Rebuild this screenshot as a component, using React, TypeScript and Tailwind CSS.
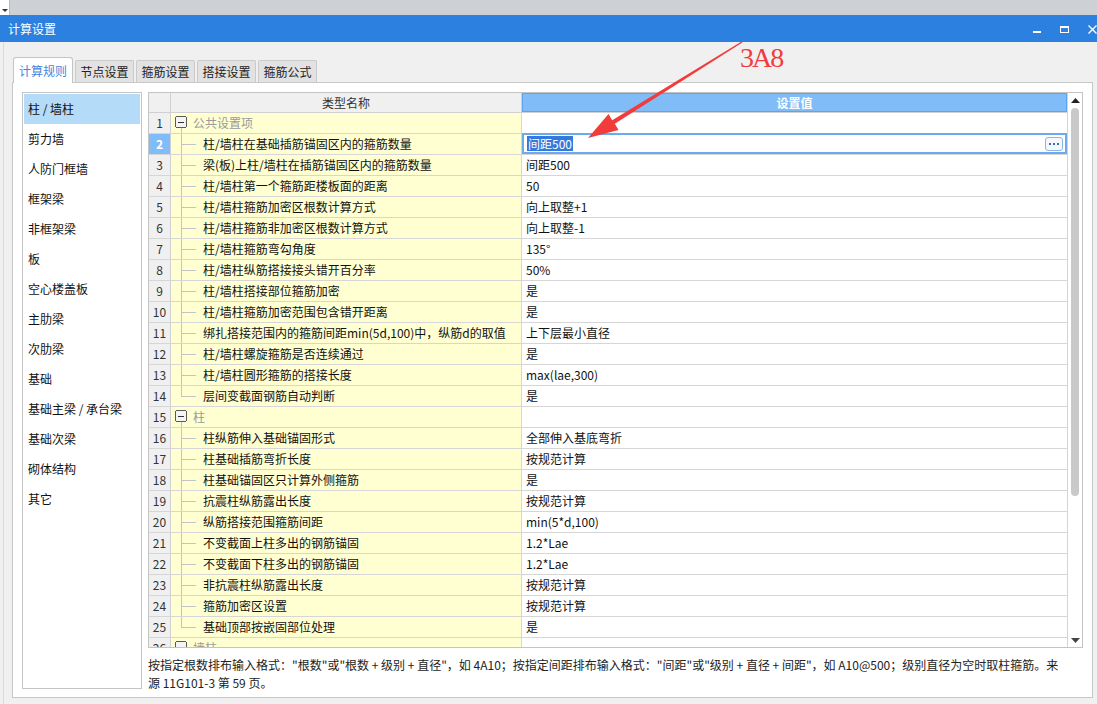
import React from "react";

type Row = { name: string; value?: string; group?: boolean; last?: boolean; editing?: boolean };

const rows: Row[] = [
  { name: "公共设置项", group: true },
  { name: "柱/墙柱在基础插筋锚固区内的箍筋数量", value: "间距500", editing: true },
  { name: "梁(板)上柱/墙柱在插筋锚固区内的箍筋数量", value: "间距500" },
  { name: "柱/墙柱第一个箍筋距楼板面的距离", value: "50" },
  { name: "柱/墙柱箍筋加密区根数计算方式", value: "向上取整+1" },
  { name: "柱/墙柱箍筋非加密区根数计算方式", value: "向上取整-1" },
  { name: "柱/墙柱箍筋弯勾角度", value: "135°" },
  { name: "柱/墙柱纵筋搭接接头错开百分率", value: "50%" },
  { name: "柱/墙柱搭接部位箍筋加密", value: "是" },
  { name: "柱/墙柱箍筋加密范围包含错开距离", value: "是" },
  { name: "绑扎搭接范围内的箍筋间距min(5d,100)中，纵筋d的取值", value: "上下层最小直径" },
  { name: "柱/墙柱螺旋箍筋是否连续通过", value: "是" },
  { name: "柱/墙柱圆形箍筋的搭接长度", value: "max(lae,300)" },
  { name: "层间变截面钢筋自动判断", value: "是", last: true },
  { name: "柱", group: true },
  { name: "柱纵筋伸入基础锚固形式", value: "全部伸入基底弯折" },
  { name: "柱基础插筋弯折长度", value: "按规范计算" },
  { name: "柱基础锚固区只计算外侧箍筋", value: "是" },
  { name: "抗震柱纵筋露出长度", value: "按规范计算" },
  { name: "纵筋搭接范围箍筋间距", value: "min(5*d,100)" },
  { name: "不变截面上柱多出的钢筋锚固", value: "1.2*Lae" },
  { name: "不变截面下柱多出的钢筋锚固", value: "1.2*Lae" },
  { name: "非抗震柱纵筋露出长度", value: "按规范计算" },
  { name: "箍筋加密区设置", value: "按规范计算" },
  { name: "基础顶部按嵌固部位处理", value: "是", last: true },
  { name: "墙柱", group: true },
];

const sideItems = [
  "柱 / 墙柱",
  "剪力墙",
  "人防门框墙",
  "框架梁",
  "非框架梁",
  "板",
  "空心楼盖板",
  "主肋梁",
  "次肋梁",
  "基础",
  "基础主梁 / 承台梁",
  "基础次梁",
  "砌体结构",
  "其它",
];

const tabs = ["计算规则", "节点设置", "箍筋设置", "搭接设置", "箍筋公式"];

function Connector({ last }: { last?: boolean }) {
  return (
    <svg width="32" height="20" className="shrink-0" shapeRendering="crispEdges">
      <line x1="10.5" y1="0" x2="10.5" y2={last ? 10.5 : 20} stroke="#c4c4c4" />
      <line x1="10.5" y1="10.5" x2="25" y2="10.5" stroke="#c4c4c4" />
    </svg>
  );
}

function GroupBox() {
  return (
    <svg width="22" height="20" className="shrink-0" shapeRendering="crispEdges">
      <rect x="4.5" y="3.5" width="11" height="11" rx="2" fill="#f4f4f4" stroke="#5a5a5a" />
      <line x1="7" y1="9.5" x2="13" y2="9.5" stroke="#333" />
      <line x1="10.5" y1="15" x2="10.5" y2="20" stroke="#c4c4c4" />
    </svg>
  );
}

function GridRow({ row, index }: { row: Row; index: number }) {
  const selected = row.editing;
  return (
    <div className="flex h-[21px] shrink-0 border-b border-[#d6d6d6]">
      <div
        className={`w-[22px] shrink-0 border-r border-[#d0d0d0] flex items-center justify-center text-[12px] ${
          selected ? "bg-[#7fbcf8] text-white font-bold" : "bg-[#f0f0f0] text-[#333]"
        }`}
      >
        {index + 1}
      </div>
      <div className="w-[351px] shrink-0 border-r border-[#d6d6d6] bg-[#ffffd2] flex items-center text-[12px]">
        {row.group ? (
          <>
            <GroupBox />
            <span className="text-[#9a9a9a]">{row.name}</span>
          </>
        ) : (
          <>
            <Connector last={row.last} />
            <span className="text-[#111] whitespace-nowrap">{row.name}</span>
          </>
        )}
      </div>
      <div className="flex-1 bg-white flex items-center text-[12px] text-[#111] min-w-0">
        {selected ? (
          <div className="flex-1 h-[21px] -mt-px border-2 border-[#6aabf0] flex items-center pl-[3px] pr-[2px]">
            <span className="bg-[#3479db] text-white leading-[15px] px-px">{row.value}</span>
            <div className="flex-1" />
            <div className="w-[18px] h-[14px] rounded-[3px] border border-[#88b6e6] bg-[#f4f8fd] flex items-center justify-center gap-[2px]">
              <span className="w-[2px] h-[2px] bg-[#3a6fb0]" />
              <span className="w-[2px] h-[2px] bg-[#3a6fb0]" />
              <span className="w-[2px] h-[2px] bg-[#3a6fb0]" />
            </div>
          </div>
        ) : (
          <span className="pl-[4px] whitespace-nowrap">{row.value}</span>
        )}
      </div>
    </div>
  );
}

export default function App() {
  return (
    <div className="relative w-[1097px] h-[704px] overflow-hidden bg-[#f0f0f0] font-['Noto_Sans_CJK_SC','Liberation_Sans',sans-serif] text-[12px] leading-[16px]">
      {/* top strip */}
      <div className="h-[15px] bg-[#cdd0d5] flex">
        <div className="w-[10px] h-[15px] bg-white border-r border-[#b8bcc2] flex items-end justify-center pb-[2px]">
          <svg width="6" height="4">
            <polygon points="0,0 6,0 3,3" fill="#333" />
          </svg>
        </div>
      </div>

      {/* title bar */}
      <div className="h-[27px] bg-[#2c80e0] flex items-center pl-[8px]">
        <span className="text-white text-[12px]">计算设置</span>
        <div className="ml-auto flex items-center gap-[19px]">
          <svg width="8" height="10" shapeRendering="crispEdges">
            <rect x="0" y="7" width="8" height="2" fill="#fff" />
          </svg>
          <svg width="9" height="10" shapeRendering="crispEdges">
            <rect x="0.5" y="2.5" width="8" height="6" fill="none" stroke="#fff" />
            <rect x="0" y="2" width="9" height="2" fill="#fff" />
          </svg>
          <svg width="9" height="10">
            <path d="M0.5 1.5 L8.5 9.5 M8.5 1.5 L0.5 9.5" stroke="#fff" strokeWidth="1.4" />
          </svg>
        </div>
      </div>

      {/* body */}
      <div className="ml-[3px] border-l border-[#dadada] h-[662px] pt-[15px] pl-[8px]">
        <div className="relative z-10 flex items-end gap-[2px] h-[25px] pl-px">
          {tabs.map((t, i) =>
            i === 0 ? (
              <div
                key={t}
                className="w-[60px] h-[26px] -mb-px bg-white border border-b-0 border-[#c4c4c4] rounded-t-[3px] flex items-center justify-center text-[#3f86dc] text-[12px]"
              >
                {t}
              </div>
            ) : (
              <div
                key={t}
                className="w-[59px] h-[22px] bg-[#e2e2e2] border border-b-0 border-[#cacaca] rounded-t-[2px] flex items-center justify-center text-[#222] text-[12px]"
              >
                {t}
              </div>
            )
          )}
        </div>

        <div className="w-[1081px] h-[616px] bg-white border border-[#c8c8c8] flex gap-[6px] pt-[9px] pl-[9px]">
          {/* side list */}
          <div className="w-[120px] h-[597px] shrink-0 border border-[#c4c4c4] bg-white p-px flex flex-col">
            {sideItems.map((s, i) => (
              <div
                key={s}
                className={`h-[30px] shrink-0 flex items-center pl-[4px] text-[12px] text-[#111] whitespace-nowrap ${
                  i === 0 ? "bg-[#b4dbf7]" : ""
                }`}
              >
                {s}
              </div>
            ))}
          </div>

          {/* grid + note */}
          <div className="w-[935px] flex flex-col">
            <div className="h-[556px] border border-[#c4c4c4] flex">
              <div className="flex-1 flex flex-col overflow-hidden">
                <div className="flex h-[20px] shrink-0 border-b border-[#d0d0d0]">
                  <div className="w-[22px] shrink-0 bg-[#f0f0f0] border-r border-[#d0d0d0]" />
                  <div className="w-[351px] shrink-0 bg-[#f0f0f0] border-r border-[#d0d0d0] flex items-center justify-center text-[#333]">
                    类型名称
                  </div>
                  <div className="flex-1 bg-[#80bdf8] border border-[#5ea3ef] flex items-center justify-center text-white font-bold">
                    设置值
                  </div>
                </div>
                {rows.map((r, i) => (
                  <GridRow key={i} row={r} index={i} />
                ))}
              </div>
              {/* scrollbar */}
              <div className="w-[15px] shrink-0 border-l border-[#d4d4d4] bg-white flex flex-col items-center pt-[5px] pb-[4px]">
                <svg width="9" height="5">
                  <polygon points="0,5 9,5 4.5,0" fill="#222" />
                </svg>
                <div className="w-[8px] h-[388px] mt-[5px] rounded-full bg-[#c9c9c9]" />
                <div className="flex-1" />
                <svg width="9" height="5">
                  <polygon points="0,0 9,0 4.5,5" fill="#444" />
                </svg>
              </div>
            </div>
            <p className="mt-[8px] text-[12px] leading-[18px] text-[#222] whitespace-nowrap">
              按指定根数排布输入格式："根数"或"根数 + 级别 + 直径"，如 4A10；按指定间距排布输入格式："间距"或"级别 + 直径 + 间距"，如 A10@500；级别直径为空时取柱箍筋。来
              <br />
              源 11G101-3 第 59 页。
            </p>
          </div>
        </div>
      </div>

      {/* annotation overlay */}
      <svg className="absolute left-0 top-0 pointer-events-none" width="1097" height="704">
        <path
          d="M588 138 L618.5 130 L614.8 123.8 L742.4 42.6 L741.6 41.4 L612.2 120.2 L608.5 114 Z"
          fill="#f23c3c"
        />
      </svg>
      <span className="absolute left-[740px] top-[44px] font-['Liberation_Serif',serif] text-[28px] leading-[28px] tracking-[-2px] text-[#f23c3c] pointer-events-none">
        3A8
      </span>
    </div>
  );
}
